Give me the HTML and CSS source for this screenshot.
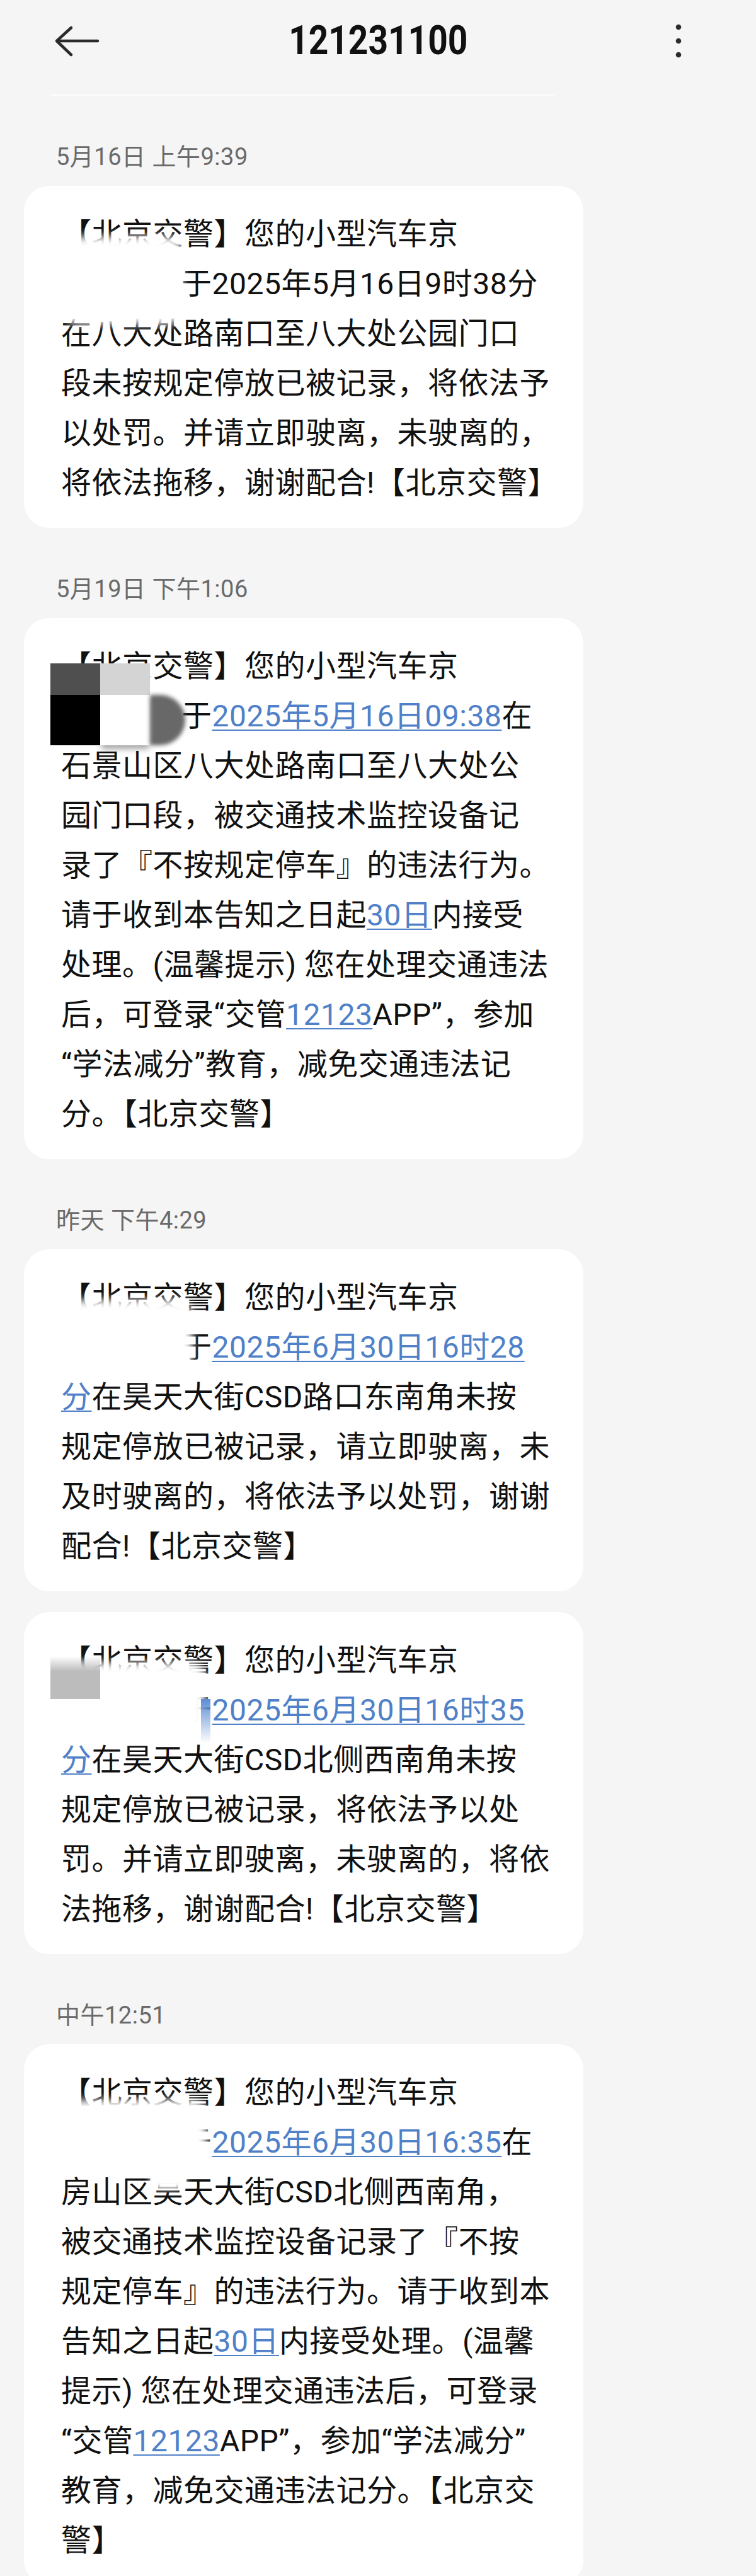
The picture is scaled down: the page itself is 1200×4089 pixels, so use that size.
FILE: index.html
```html
<!DOCTYPE html>
<html lang="zh-CN">
<head>
<meta charset="utf-8">
<title>121231100</title>
<link rel="stylesheet" href="styles.css">
</head>
<body>
<div class="screen">
  <header class="topbar">
    <svg class="back" width="80" height="60" viewBox="0 0 80 60" aria-label="返回">
      <path d="M33 9 L10 30 L33 52 M10 30 H75" fill="none" stroke="#2b2b2b" stroke-width="4.5" stroke-linecap="round" stroke-linejoin="round"/>
    </svg>
    <h1 class="title"><span class="title-text">121231100</span></h1>
    <svg class="more" width="12" height="56" viewBox="0 0 12 56" aria-label="更多">
      <circle cx="6" cy="6" r="4.3" fill="#2b2b2b"/>
      <circle cx="6" cy="28" r="4.3" fill="#2b2b2b"/>
      <circle cx="6" cy="50" r="4.3" fill="#2b2b2b"/>
    </svg>
  </header>
  <div class="divider"></div>

  <main class="thread">
    <div class="stamp">5月16日 上午9:39</div>
    <div class="bubble">
      <div class="line">【北京交警】您的小型汽车京</div>
      <div class="line"><span class="gap"></span>于2025年5月16日9时38分</div>
      <div class="line">在八大处路南口至八大处公园门口</div>
      <div class="line">段未按规定停放已被记录，将依法予</div>
      <div class="line">以处罚。并请立即驶离，未驶离的，</div>
      <div class="line">将依法拖移，谢谢配合!【北京交警】</div>
      <div class="blot blot-a"></div>
    </div>

    <div class="stamp">5月19日 下午1:06</div>
    <div class="bubble">
      <div class="line">【北京交警】您的小型汽车京</div>
      <div class="line"><span class="gap"></span>于<span class="link">2025年5月16日09:38</span>在</div>
      <div class="line">石景山区八大处路南口至八大处公</div>
      <div class="line">园门口段，被交通技术监控设备记</div>
      <div class="line">录了『不按规定停车』的违法行为。</div>
      <div class="line">请于收到本告知之日起<span class="link">30日</span>内接受</div>
      <div class="line">处理。(温馨提示) 您在处理交通违法</div>
      <div class="line">后，可登录“交管<span class="link">12123</span>APP”，参加</div>
      <div class="line">“学法减分”教育，减免交通违法记</div>
      <div class="line">分。【北京交警】</div>
      <div class="mosaic">
        <span class="tile t-dark"></span><span class="tile t-light"></span><span class="tile t-none"></span>
        <span class="tile t-black"></span><span class="tile t-white"></span><span class="tile t-grey"></span>
      </div>
    </div>

    <div class="stamp">昨天 下午4:29</div>
    <div class="bubble">
      <div class="line">【北京交警】您的小型汽车京</div>
      <div class="line"><span class="gap"></span>于<span class="link">2025年6月30日16时28</span></div>
      <div class="line"><span class="link">分</span>在昊天大街CSD路口东南角未按</div>
      <div class="line">规定停放已被记录，请立即驶离，未</div>
      <div class="line">及时驶离的，将依法予以处罚，谢谢</div>
      <div class="line">配合!【北京交警】</div>
      <div class="blot blot-c"></div>
    </div>
    <div class="bubble">
      <div class="line">【北京交警】您的小型汽车京</div>
      <div class="line"><span class="gap"></span>于<span class="link">2025年6月30日16时35</span></div>
      <div class="line"><span class="link">分</span>在昊天大街CSD北侧西南角未按</div>
      <div class="line">规定停放已被记录，将依法予以处</div>
      <div class="line">罚。并请立即驶离，未驶离的，将依</div>
      <div class="line">法拖移，谢谢配合!【北京交警】</div>
      <div class="blot blot-d"></div>
      <div class="greyblock"></div>
      <div class="cursor"></div>
    </div>

    <div class="stamp">中午12:51</div>
    <div class="bubble">
      <div class="line">【北京交警】您的小型汽车京</div>
      <div class="line"><span class="gap"></span>于<span class="link">2025年6月30日16:35</span>在</div>
      <div class="line">房山区昊天大街CSD北侧西南角，</div>
      <div class="line">被交通技术监控设备记录了『不按</div>
      <div class="line">规定停车』的违法行为。请于收到本</div>
      <div class="line">告知之日起<span class="link">30日</span>内接受处理。(温馨</div>
      <div class="line">提示) 您在处理交通违法后，可登录</div>
      <div class="line">“交管<span class="link">12123</span>APP”，参加“学法减分”</div>
      <div class="line">教育，减免交通违法记分。【北京交</div>
      <div class="line">警】</div>
      <div class="blot blot-e"></div>
      <div class="blot blot-f"></div>
    </div>
  </main>
</div>
</body>
</html>
```

FILE: styles.css
```css
* {
  box-sizing: border-box;
  margin: 0;
  padding: 0;
}

html,
body {
  width: 1200px;
  height: 4089px;
  overflow: hidden;
  background: #f5f5f5;
}

body {
  font-family: "Roboto", "Noto Sans CJK SC", sans-serif;
  color: #111;
}

.screen {
  width: 1200px;
  height: 4089px;
  overflow: hidden;
}

/* ---------- top bar ---------- */
.topbar {
  height: 130px;
  display: grid;
  grid-template-columns: 1fr auto 1fr;
  align-items: center;
}

.back {
  display: block;
  justify-self: start;
  margin-left: 80px;
}

.title {
  font-size: 64px;
  font-weight: 700;
  line-height: 1;
  color: #111;
}

.title-text {
  display: inline-block;
  transform: scaleX(0.86);
}

.more {
  display: block;
  justify-self: end;
  margin-right: 117px;
}

.divider {
  margin: 20px 0 0 80px;
  width: 800px;
  height: 2px;
  background: #fcfcfc;
}

/* ---------- thread ---------- */
.stamp {
  margin: 72px 0 21px 89px;
  font-size: 38px;
  line-height: 50px;
  letter-spacing: 0.5px;
  color: #6a6a6a;
}

.bubble {
  position: relative;
  margin-left: 38px;
  width: 888px;
  padding: 37px 20px 32px 59px;
  background: #fff;
  border-radius: 40px;
  font-size: 48px;
  line-height: 79px;
  letter-spacing: 0.5px;
  color: #111;
  overflow: hidden;
}

.bubble + .bubble {
  margin-top: 33px;
}

.line {
  white-space: nowrap;
}

.gap {
  display: inline-block;
  width: 191px;
}

.link {
  color: #5081c8;
  text-decoration: underline;
  text-decoration-color: #5081c8;
  text-decoration-thickness: 2px;
  text-underline-offset: 5px;
}

/* ---------- redaction overlays ---------- */
.blot {
  position: absolute;
  background: #fff;
  border-radius: 24px;
  filter: blur(7px);
}

.blot-a {
  left: 62px;
  top: 80px;
  width: 190px;
  height: 140px;
}

.blot-c {
  left: 62px;
  top: 80px;
  width: 205px;
  height: 120px;
}

.blot-d {
  left: 60px;
  top: 80px;
  width: 228px;
  height: 118px;
}

.blot-e {
  left: 60px;
  top: 88px;
  width: 230px;
  height: 110px;
}

.blot-f {
  left: 200px;
  top: 200px;
  width: 58px;
  height: 30px;
  filter: blur(5px);
}

.mosaic {
  position: absolute;
  left: 42px;
  top: 72px;
  display: grid;
  grid-template-columns: 79px 79px 56px;
  grid-template-rows: 50px 80px;
}

.tile {
  display: block;
}

.t-dark {
  background: #4f4f4f;
}

.t-light {
  background: #d4d4d4;
}

.t-black {
  background: #000;
}

.t-white {
  background: #fff;
  box-shadow: 0 8px 9px -2px rgba(0, 0, 0, 0.35);
}

.t-grey {
  background: #686868;
  border-radius: 0 40px 40px 0;
  filter: blur(3px);
}

.greyblock {
  position: absolute;
  left: 42px;
  top: 70px;
  width: 79px;
  height: 68px;
  background: linear-gradient(to bottom, rgba(188, 188, 188, 0), #bcbcbc 35%);
}

.cursor {
  position: absolute;
  left: 281px;
  top: 138px;
  width: 15px;
  height: 70px;
  background: linear-gradient(to bottom, #5d8dd3, rgba(93, 141, 211, 0));
}
```
